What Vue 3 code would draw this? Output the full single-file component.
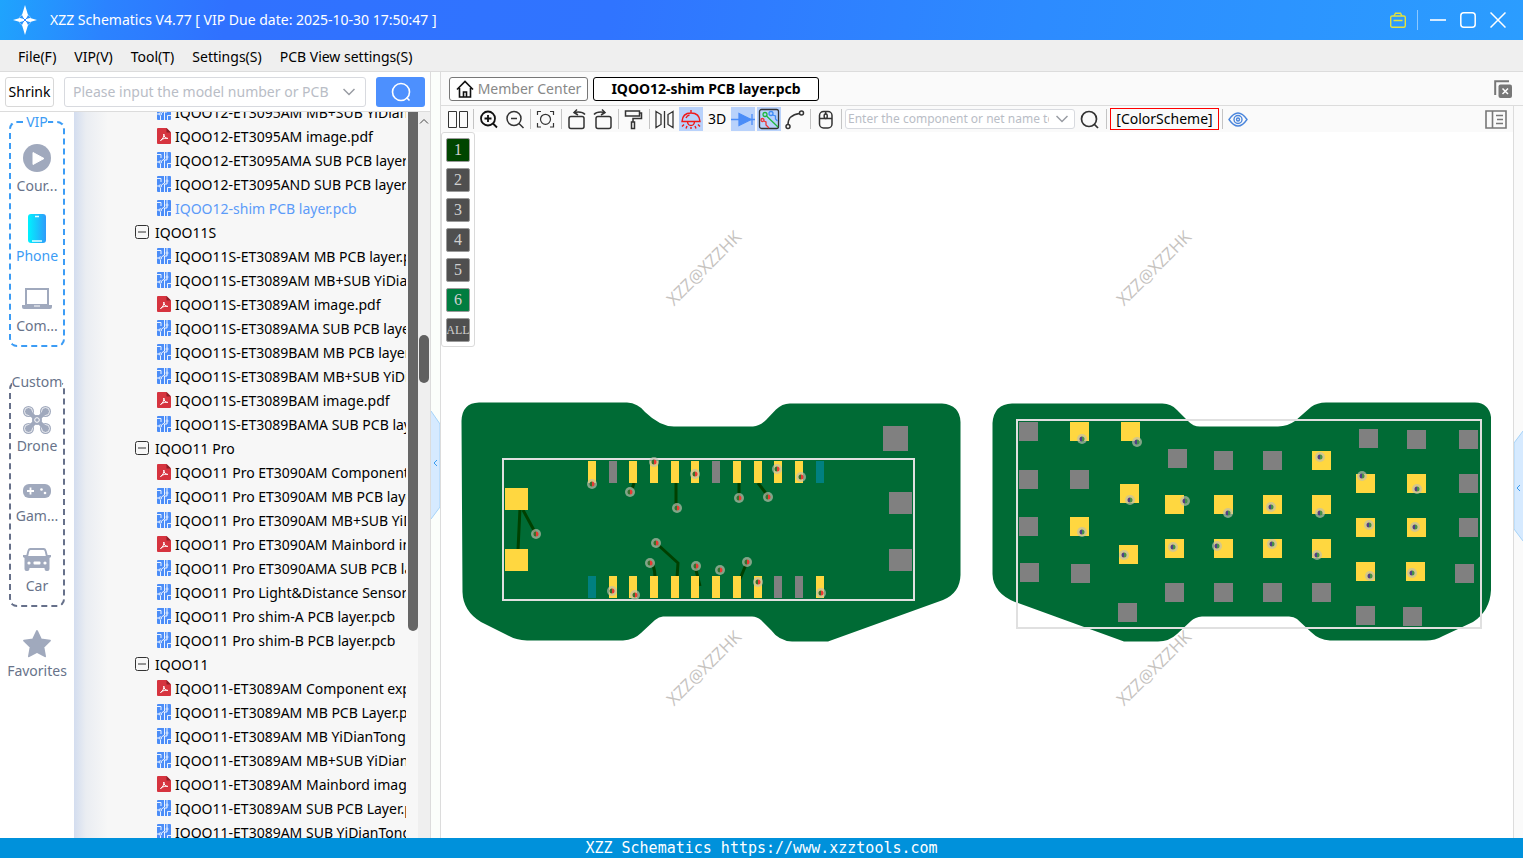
<script setup>
import { ref } from 'vue'

const menus = ['File(F)', 'VIP(V)', 'Tool(T)', 'Settings(S)', 'PCB View settings(S)']
const groups = [
  { name: 'VIP', kind: 'vip', items: [['play', 'Cour...'], ['phone', 'Phone'], ['laptop', 'Com...']] },
  { name: 'Custom', kind: 'custom', items: [['drone', 'Drone'], ['game', 'Gam...'], ['car', 'Car']] },
]
const tree = [
  ['pcb', 'IQOO12-ET3095AM MB+SUB YiDianTong.pcb'],
  ['pdf', 'IQOO12-ET3095AM image.pdf'],
  ['pcb', 'IQOO12-ET3095AMA SUB PCB layer.pcb'],
  ['pcb', 'IQOO12-ET3095AND SUB PCB layer.pcb'],
  ['pcb', 'IQOO12-shim PCB layer.pcb'],
  ['dir', 'IQOO11S'],
  ['pcb', 'IQOO11S-ET3089AM MB PCB layer.pcb'],
  ['pcb', 'IQOO11S-ET3089AM MB+SUB YiDianTong.pcb'],
  ['pdf', 'IQOO11S-ET3089AM image.pdf'],
  ['pcb', 'IQOO11S-ET3089AMA SUB PCB layer.pcb'],
  ['pcb', 'IQOO11S-ET3089BAM MB PCB layer.pcb'],
  ['pcb', 'IQOO11S-ET3089BAM MB+SUB YiDianTong.pcb'],
  ['pdf', 'IQOO11S-ET3089BAM image.pdf'],
  ['pcb', 'IQOO11S-ET3089BAMA SUB PCB layer.pcb'],
  ['dir', 'IQOO11 Pro'],
  ['pdf', 'IQOO11 Pro ET3090AM Component explorer.pdf'],
  ['pcb', 'IQOO11 Pro ET3090AM MB PCB layer.pcb'],
  ['pcb', 'IQOO11 Pro ET3090AM MB+SUB YiDianTong.pcb'],
  ['pdf', 'IQOO11 Pro ET3090AM Mainbord image.pdf'],
  ['pcb', 'IQOO11 Pro ET3090AMA SUB PCB layer.pcb'],
  ['pcb', 'IQOO11 Pro Light&Distance Sensor.pcb'],
  ['pcb', 'IQOO11 Pro shim-A PCB layer.pcb'],
  ['pcb', 'IQOO11 Pro shim-B PCB layer.pcb'],
  ['dir', 'IQOO11'],
  ['pdf', 'IQOO11-ET3089AM Component explorer.pdf'],
  ['pcb', 'IQOO11-ET3089AM MB PCB Layer.pcb'],
  ['pcb', 'IQOO11-ET3089AM MB YiDianTong.pcb'],
  ['pcb', 'IQOO11-ET3089AM MB+SUB YiDianTong.pcb'],
  ['pdf', 'IQOO11-ET3089AM Mainbord image.pdf'],
  ['pcb', 'IQOO11-ET3089AM SUB PCB Layer.pcb'],
  ['pcb', 'IQOO11-ET3089AM SUB YiDianTong.pcb'],
]
const active = ref('IQOO12-shim PCB layer.pcb')
const layers = ['1', '2', '3', '4', '5', '6', 'ALL']

const colors = { Y: '#ffd740', G: '#808080', T: '#008080' }
const padX = [588, 609, 629, 650, 671, 691, 712, 733, 754, 774, 795, 816]
const strip = (kinds, y) => padX.map((x, i) => ({ x, y, w: 8, h: 22, fill: colors[kinds[i]] }))
const square = (fill, w, h) => ([x, y]) => ({ x, y, w, h, fill })

const leftPads = [
  ...strip('YGYYYYGYYYYT', 461),
  ...strip('TYYYYYYYYGGY', 576),
  ...[[505, 488], [505, 549]].map(square(colors.Y, 23, 22)),
  ...[[889, 492], [889, 549]].map(square(colors.G, 23, 22)),
  square(colors.G, 25, 25)([883, 426]),
]
const leftVias = [[592, 484], [630, 492], [654, 462], [677, 508], [695, 474], [536, 534], [656, 543], [650, 563], [696, 566], [612, 591], [635, 595], [739, 498], [768, 497], [777, 469], [801, 477], [720, 570], [747, 562], [758, 582], [821, 593]]
const rightPads = [
  ...[[1019, 422], [1019, 470], [1019, 517], [1020, 563], [1070, 470], [1071, 564], [1118, 603], [1168, 449], [1165, 583], [1214, 451], [1214, 583], [1263, 451], [1263, 583], [1312, 583], [1359, 429], [1407, 430], [1459, 430], [1459, 474], [1459, 518], [1455, 564], [1356, 606], [1403, 607]].map(square(colors.G, 19, 19)),
  ...[[1070, 422], [1121, 422], [1120, 484], [1070, 517], [1119, 545], [1165, 495], [1214, 495], [1165, 539], [1214, 539], [1263, 495], [1263, 539], [1312, 451], [1312, 495], [1312, 539], [1356, 474], [1407, 474], [1356, 518], [1407, 518], [1356, 562], [1406, 562]].map(square(colors.Y, 19, 19)),
]
const rightVias = [[1082, 439], [1137, 442], [1130, 500], [1185, 501], [1228, 513], [1082, 532], [1124, 555], [1173, 547], [1217, 546], [1320, 457], [1271, 507], [1320, 513], [1272, 544], [1317, 555], [1362, 476], [1417, 489], [1369, 525], [1415, 527], [1370, 576], [1412, 573]]
const marks = [[704, 268], [1154, 268], [704, 668], [1154, 668]]
</script>

<template>
  <div class="app">
    <header class="title">
      <svg class="logo" width="24" height="30" viewBox="0 0 24 30">
        <circle cx="12" cy="15" r="6" fill="none" stroke="#bfe0ff" stroke-opacity=".6" />
        <path d="M12 0l3 10-2 4h-2l-2-4zM12 30l3-10-2-4h-2l-2 4zM0 15l7-2 4 1v2l-4 1zM24 15l-7-2-4 1v2l4 1z" fill="#fff" />
        <path d="M8 11l8 8M16 11l-8 8" stroke="#2f86ff" />
      </svg>
      <h1>XZZ Schematics V4.77 [ VIP Due date: 2025-10-30 17:50:47 ]</h1>
      <div class="win">
        <button aria-label="Toolbox"><svg width="16" height="16" viewBox="0 0 16 16" fill="none" stroke="#e3e23c" stroke-width="1.4"><rect x=".7" y="4" width="14.6" height="11.3" rx="1.5" /><path d="M4 4l1.500-2.800h5L12 4M3.500 8.500h9" /></svg></button>
        <i class="bar"></i>
        <button aria-label="Minimize"><svg width="16" height="16"><path d="M0 8h16" stroke="#fff" stroke-width="1.600" /></svg></button>
        <button aria-label="Maximize"><svg width="16" height="16"><rect x=".8" y=".8" width="14.4" height="14.4" rx="3" fill="none" stroke="#fff" stroke-width="1.500" /></svg></button>
        <button aria-label="Close"><svg width="16" height="16"><path d="M.5.5l15 15M15.500.5l-15 15" stroke="#fff" stroke-width="1.500" /></svg></button>
      </div>
    </header>

    <nav class="menu"><button v-for="m in menus" :key="m">{{ m }}</button></nav>

    <main>
      <aside class="left">
        <form class="find" @submit.prevent>
          <button type="button" class="shrink">Shrink</button>
          <div class="combo">
            <input aria-label="Model search" placeholder="Please input the model number or PCB number" />
            <svg width="12" height="8"><path d="M.5 1l5.500 5.500L11.500 1" fill="none" stroke="#999ca3" stroke-width="1.500" /></svg>
          </div>
          <button class="go" aria-label="Search"><svg width="20" height="20" fill="none" stroke="#fff" stroke-width="1.600"><circle cx="10" cy="10" r="8.500" /><path d="M15.500 15.500l3 3" /></svg></button>
        </form>
        <div class="split">
          <nav class="side">
            <fieldset v-for="g in groups" :key="g.name" :class="g.kind">
              <legend>{{ g.name }}</legend>
              <button v-for="[icon, label] in g.items" :key="label" class="item" :class="{ on: icon === 'phone' }">
                <svg width="30" height="30" viewBox="0 0 30 30" fill="#a0a9bd">
                  <template v-if="icon === 'play'"><circle cx="15" cy="15" r="14" /><path d="M11 9.500l11 6-11 6z" fill="#fff" stroke="#fff" stroke-linejoin="round" /></template>
                  <template v-else-if="icon === 'phone'">
                    <defs><linearGradient id="ph"><stop stop-color="#00f2fe" /><stop offset="1" stop-color="#2f9bfa" /></linearGradient></defs>
                    <rect x="6" y="1" width="18" height="29" rx="3" fill="url(#ph)" /><path d="M13 3.500h4M10 28h10" stroke="#e6ffff" stroke-width="1.500" />
                  </template>
                  <template v-else-if="icon === 'laptop'"><rect x="4" y="6" width="22" height="16" fill="none" stroke="#a0a9bd" stroke-width="2" /><path d="M0 22h30v2q0 2-2 2H2q-2 0-2-2z" /><path d="M12 23h6" stroke="#fff" /></template>
                  <template v-else-if="icon === 'drone'">
                    <circle cx="6.500" cy="6.500" r="5.500" /><circle cx="23.500" cy="6.500" r="5.500" /><circle cx="6.500" cy="23.500" r="5.500" /><circle cx="23.500" cy="23.500" r="5.500" />
                    <g fill="none" stroke="#fff" stroke-width=".8"><circle cx="6.500" cy="6.500" r="4" /><circle cx="23.500" cy="6.500" r="4" /><circle cx="6.500" cy="23.500" r="4" /><circle cx="23.500" cy="23.500" r="4" /></g>
                    <path d="M7 7l16 16M23 7L7 23" stroke="#a0a9bd" stroke-width="4.500" stroke-linecap="round" /><circle cx="15" cy="15" r="5" /><circle cx="15" cy="15" r="2.300" fill="none" stroke="#fff" />
                  </template>
                  <template v-else-if="icon === 'game'"><rect x="1" y="9" width="28" height="14" rx="6" /><path d="M5 16h7M8.500 12.500v7" stroke="#fff" stroke-width="1.800" /><circle cx="19.500" cy="14.500" r="1.300" fill="#fff" /><circle cx="23" cy="18" r="1.300" fill="#fff" /></template>
                  <template v-else>
                    <path d="M8 3h14q2 0 2.600 3l1 4H29v2l-1.500 1v11q0 2-2 2h-1q-2 0-2-3h-15q0 3-2 3h-1q-2 0-2-2V13L1 12v-2h3.400l1-4Q6 3 8 3z" />
                    <path d="M8.500 5h13q1 0 1.300 1.500l1 4.500H6.200l1-4.500Q7.500 5 8.500 5z" fill="#fff" /><circle cx="7" cy="18" r="1.600" fill="#fff" /><circle cx="23" cy="18" r="1.600" fill="#fff" /><rect x="11.500" y="16.500" width="7" height="3" rx="1" fill="#fff" />
                  </template>
                </svg>
                <span>{{ label }}</span>
              </button>
            </fieldset>
            <button class="item fav">
              <svg width="30" height="30" viewBox="0 0 30 30" fill="#a0a9bd"><path d="M15 2l4 8.500 9 1.200-6.600 6.300 1.700 9.300-8.100-4.300-8.100 4.300L8.600 18 2 11.700l9-1.200z" stroke="#a0a9bd" stroke-width="1.800" stroke-linejoin="round" /></svg>
              <span>Favorites</span>
            </button>
          </nav>

          <div class="tree">
            <ul>
              <li v-for="[kind, name] in tree" :key="name" :class="[kind, { on: name === active }]">
                <svg v-if="kind === 'pcb'" width="14" height="16" viewBox="0 0 14 16">
                  <rect width="14" height="16" rx="1" fill="#4b8df8" />
                  <g fill="none" stroke="#fff" stroke-width=".9"><path d="M0 2.500h4v3.500M7.500 0v7l-3 2M10 0v4M10 6v2H7.500v8M0 10h2M3.500 12v4M10.500 16v-4.500H14" /><circle cx="10" cy="5" r="1" /><circle cx="3.300" cy="10" r="1.200" /></g>
                </svg>
                <svg v-else-if="kind === 'pdf'" width="14" height="16" viewBox="0 0 14 16">
                  <path d="M1 0h8.500L14 4.500V15q0 1-1 1H1q-1 0-1-1V1q0-1 1-1z" fill="#d6343f" /><path d="M9.500 0L14 4.500H9.500z" fill="#8e1f28" />
                  <path d="M3.500 12.500c2-1 4-4.500 3.300-6.500 0 3 2 4.600 4 4.400-2-.6-5 0-7.300 2.100" fill="none" stroke="#fff" />
                </svg>
                <svg v-else width="14" height="14" viewBox="0 0 14 14" fill="none" stroke="#333"><rect x=".5" y=".5" width="13" height="13" rx="2" /><path d="M3 7h8" /></svg>
                <button @click="active = name">{{ name }}</button>
              </li>
            </ul>
          </div>
          <div class="inner"><i></i></div>
          <div class="outer"><svg width="10" height="6"><path d="M1 5.500l4-4 4 4" fill="none" stroke="#444" /></svg><i></i></div>
        </div>
      </aside>

      <div class="gutter">
        <button aria-label="Collapse file list"><svg width="9" height="108" viewBox="0 0 9 108"><path d="M0 0l9 13v83l-9 12z" fill="#d6eaff" /><path d="M0 0l9 13v83l-9 12" fill="none" stroke="#a5d3f8" /><path d="M6 49l-3 3 3 3" fill="none" stroke="#3a9cf0" /></svg></button>
      </div>

      <section class="work">
        <div class="tabs">
          <button class="tab home"><svg width="18" height="18" viewBox="0 0 18 18" fill="none" stroke="#111" stroke-width="1.600"><path d="M1 9.500L9 1.500l8 8M3.500 8v9h11V8M7.500 17v-5h3v5" /></svg>Member Center</button>
          <button class="tab cur">IQOO12-shim PCB layer.pcb</button>
          <button class="closeall" aria-label="Close all tabs"><svg width="18" height="18" viewBox="0 0 18 18"><path d="M1.200 15V1.200H15" fill="none" stroke="#777" stroke-width="2" /><rect x="4.500" y="4.500" width="13.500" height="13.500" rx="2" fill="#777" /><path d="M8.500 8.500l5.500 5.500M14 8.500L8.500 14" stroke="#fff" stroke-width="1.500" /></svg></button>
        </div>
        <div class="below">
          <div class="stage">
            <div class="tools">
              <button aria-label="Split view"><svg viewBox="0 0 24 24"><path d="M2.500 4.500h8v16h-8zM13.500 4.500h8v16h-8z" stroke-width="1" /></svg></button>
              <i></i>
              <button aria-label="Zoom in"><svg viewBox="0 0 24 24" stroke="#111" stroke-width="1.800"><circle cx="11" cy="11.500" r="7" /><path d="M16 16.500l4 4M7.500 11.500h7M11 8v7" /></svg></button>
              <button aria-label="Zoom out"><svg viewBox="0 0 24 24"><circle cx="11" cy="11.500" r="7" /><path d="M16 16.500l4.500 4.500M8 11.500h6" /></svg></button>
              <i></i>
              <button aria-label="Fit"><svg viewBox="0 0 24 24" stroke-width="1.200"><path d="M3.500 8V4.500H7M16 4.500h3.500V8M19.500 16v4H16M7 20H3.500v-4" /><circle cx="11.500" cy="12.300" r="5" /></svg></button>
              <i></i>
              <button aria-label="Rotate left"><svg viewBox="0 0 24 24"><rect x="4" y="9.500" width="15" height="12" rx="2" /><path d="M20 7.500Q17 4 9 5.500M12 2.500L9 5.500l4 2.500" /></svg></button>
              <button aria-label="Rotate right"><svg viewBox="0 0 24 24"><rect x="5" y="9.500" width="15" height="12" rx="2" /><path d="M3 7.500Q6 4 14 5.500M11 2.500l3 3-4 2.500" /></svg></button>
              <i></i>
              <button aria-label="Format painter"><svg viewBox="0 0 24 24"><path d="M3.500 4h14v5h-14zM17.500 6h2v5.500H11V15M9.500 15h3v6.500h-3z" /></svg></button>
              <i></i>
              <button aria-label="Mirror"><svg viewBox="0 0 24 24" stroke-width="1.300"><path d="M11.500 4v17M3 4.500l5 3v10l-5 3zM20 4.500l-5 3v10l5 3z" /></svg></button>
              <button class="lit" aria-label="Light"><svg viewBox="0 0 24 24" stroke="#f01818" stroke-width="1.400"><path d="M12 3v3M3 14.500Q3.500 6 12 6t9 8.500zM8.500 15q.5 3.500 3.500 3.500t3.500-3.500M5 17.500l-2 2M8 19l-1 2.500M12 20v2M16 19l1 2.500M19 17.500l2 2M7 11q1-2.500 3.500-3" /></svg></button>
              <button class="txt">3D</button>
              <button class="lit" aria-label="Diode"><svg viewBox="0 0 24 24" stroke="#4b8df8" stroke-width="1.300"><path d="M0 12.500h24M21 7v11" /><path d="M8 6.500v12l12-6z" fill="#4b8df8" /></svg></button>
              <button class="lit" aria-label="Net lines"><svg viewBox="0 0 24 24" stroke-width="1.300"><rect x="2.500" y="2.500" width="19" height="19" rx="2" /><g stroke="#1fb83c"><circle cx="8" cy="7.500" r="2" /><path d="M9.500 9l11.500 11" /></g><g stroke="#e33"><circle cx="5.500" cy="13" r="1.500" /><path d="M7 14l2 1v3l3 3" /></g><g stroke="#3f8cf5"><circle cx="14" cy="6.500" r="2" /><path d="M15.500 8l3 1v3l2 2" /></g></svg></button>
              <button aria-label="Measure"><svg viewBox="0 0 24 24"><circle cx="18.500" cy="6" r="2" /><circle cx="5" cy="19.500" r="2" /><path d="M16.500 6.500Q5 8 5 17.500" /></svg></button>
              <i></i>
              <button aria-label="Mouse mode"><svg viewBox="0 0 24 24"><rect x="5.500" y="4.500" width="12.500" height="16.500" rx="4" /><path d="M5.500 11.500H18M11.700 4.500v3" /><rect x="10.200" y="7" width="3" height="4.500" rx="1.200" /></svg></button>
              <i></i>
              <div class="combo small">
                <input aria-label="Component search" placeholder="Enter the component or net name to search" />
                <svg width="12" height="8"><path d="M.5 1l5.500 5.500L11.500 1" fill="none" stroke="#999ca3" stroke-width="1.500" /></svg>
              </div>
              <button aria-label="Find"><svg viewBox="0 0 24 24" stroke-width="1.700"><circle cx="10" cy="12" r="7.500" /><path d="M15.500 17.500l3.500 3.500" /></svg></button>
              <i></i>
              <button class="scheme">[ColorScheme]</button>
              <i></i>
              <button aria-label="Visibility"><svg viewBox="0 0 24 24" stroke="#4b86dc" stroke-width="1.400"><path d="M3 12.500Q12-.5 21 12.500Q12 25.500 3 12.500z" /><circle cx="12" cy="12.500" r="4" /><circle cx="12" cy="12.500" r="1.500" /></svg></button>
              <button class="panel" aria-label="Side panel"><svg viewBox="0 0 24 24" stroke="#777" stroke-width="1.600"><path d="M2 4h20v17H2zM8.500 4v17M12 8.500h7M13 12.500h6M12 16.500h7" /></svg></button>
            </div>
            <div class="canvas">
              <svg class="board" viewBox="0 0 1072 706" preserveAspectRatio="xMinYMin meet">
                <g transform="translate(-441 -132)">
                  <text v-for="[x, y] in marks" :key="x + '-' + y" :transform="`translate(${x} ${y}) rotate(-45)`" class="mark" dy="6">XZZ@XZZHK</text>
                  <path class="pcb" d="M461.500 421Q462 403 479 402.500H627Q638 403 645 412Q660 426.500 674 426.500H753Q760 426 766 420L776 409.500Q783 402.500 792 403.500H942Q960 405 960.500 422V575Q960 593 943 600L828 641.500H792Q779 641 771 630L761 620Q757 616.500 752 616.500H663Q659 616.500 655 620L641 633Q634 640 623 640.500H527Q516 640 508 635.500L481 622Q463 611 462.500 592z" />
                  <path class="pcb" d="M992.500 423Q994 404 1012 403.500H1161Q1171 403 1177 410L1188 421Q1193 426.500 1200 426.500H1278Q1288 426 1295 421L1311 407Q1317 402.500 1326 402.500H1475Q1489 403 1491 417V590Q1490 611 1473 622L1443 636Q1435 640.500 1426 640.500H1330Q1319 640 1311 632L1297 619Q1294 616.500 1289 616.500H1202Q1195 617 1191 621L1177 634Q1169 641.500 1158 641.500H1124L1015 602Q993 593 992.500 574z" />
                  <path class="trace" d="M520 508l-2 42M523 510l13 24M634 483l-2 6M676 483v22M739 483v14M758 483l10 13M656 543l22 20-1 15M649 562q6 2 6 16M695 566l5 20M747 562l-7 17" />
                  <rect class="frame" x="503" y="459" width="411" height="141" />
                  <rect v-for="p in leftPads" :key="p.x + '-' + p.y" :x="p.x" :y="p.y" :width="p.w" :height="p.h" :fill="p.fill" />
                  <rect v-for="p in rightPads" :key="p.x + '-' + p.y" :x="p.x" :y="p.y" :width="p.w" :height="p.h" :fill="p.fill" />
                  <rect class="frame" x="1017" y="420" width="464" height="208" />
                  <g v-for="[x, y] in leftVias" :key="x + '-' + y" :transform="`translate(${x} ${y})`"><circle class="ring" r="5" /><path d="M0-2.500v5q-2.500 0-2.500-2.500T0-2.500" fill="#38702c" /><path d="M0-2.500v5q2.500 0 2.500-2.500T0-2.500" fill="#e93a33" /></g>
                  <g v-for="[x, y] in rightVias" :key="x + '-' + y" :transform="`translate(${x} ${y})`"><circle class="ring" r="5" /><path d="M0-2.500v5q-2.500 0-2.500-2.500T0-2.500" fill="#513f86" /><path d="M0-2.500v5q2.500 0 2.500-2.500T0-2.500" fill="#46904a" /></g>
                </g>
              </svg>
              <div class="layers"><button v-for="l in layers" :key="l" :class="'l' + l">{{ l }}</button></div>
            </div>
          </div>
          <div class="edge">
            <button aria-label="Expand side panel"><svg width="9" height="110" viewBox="0 0 9 110"><path d="M9 0L0 12v86l9 12z" fill="#d6eaff" /><path d="M9 0L0 12v86l9 12" fill="none" stroke="#a5d3f8" /><path d="M6 54l-3 3 3 3" fill="none" stroke="#3a9cf0" /></svg></button>
          </div>
        </div>
      </section>
    </main>

    <footer>XZZ Schematics https://www.xzztools.com</footer>
  </div>
</template>

<style>
body { margin: 0; }
</style>

<style scoped>
* { box-sizing: border-box; }
.app { height: 100vh; display: flex; flex-direction: column; overflow: hidden; background: #fff; color: #000; font: 14px/20px "Noto Sans", "Open Sans", sans-serif; }
button { font: inherit; color: inherit; background: none; border: 0; padding: 0; margin: 0; flex: none; white-space: nowrap; }
svg { display: block; flex: none; }
input { font: inherit; border: 0; outline: 0; background: none; padding: 0; min-width: 0; flex: 1; }
input::placeholder { color: #b9bdc6; opacity: 1; }

.title { height: 40px; flex: none; display: flex; align-items: center; padding: 0 17px 0 13px; color: #fff; background: linear-gradient(100deg, #1fa4fd 0, #2b83ff 7%, #3071ff 15%, #3074ff 40%, #2d8bff 68%, #2b9dff 100%); }
h1 { margin: 0 0 0 13px; font-size: 14px; font-weight: 400; flex: 1; }
.win { display: flex; align-items: center; gap: 14px; }
.win .bar { width: 1px; height: 20px; background: #8cc8ff; margin: 0 -2px 0 -3px; }

.menu { height: 32px; flex: none; display: flex; align-items: center; gap: 18px; padding: 2px 18px 0; background: #efefef; border-bottom: 1px solid #dcdcdc; }
main { flex: 1; min-height: 0; display: flex; }
.left { width: 431px; flex: none; display: flex; flex-direction: column; border-right: 1px solid #dcdcdc; }
.find { height: 40px; flex: none; display: flex; align-items: center; padding: 1px 5px 0; border-bottom: 1px solid #dcdcdc; }
.shrink { width: 49px; height: 30px; border: 1px solid #d8d8d8; border-radius: 3px; }
.combo { display: flex; align-items: center; width: 302px; height: 30px; margin: 0 10px; padding: 0 10px 0 8px; gap: 12px; border: 1px solid #d8dadf; border-radius: 3px; background: #fff; }
.go { flex: 1; height: 30px; display: grid; place-items: center; background: #4d90fe; border-radius: 3px; }
.split { flex: 1; min-height: 0; display: flex; overflow: hidden; background: #f7f7f7; }

.side { width: 74px; flex: none; background: #fff; padding: 0 9px; color: #68738a; display: flex; flex-direction: column; align-items: stretch; }
fieldset { margin: 0 0 25px; padding: 5px 0 0; min-width: 0; border: 2px dashed #66708a; border-radius: 8px; display: flex; flex-direction: column; gap: 2px; }
fieldset.custom { margin-bottom: 16px; }
fieldset.vip { border-color: #3c9cf5; }
legend { margin: 0 auto; padding: 0; height: 20px; white-space: nowrap; }
.vip legend, .item.on { color: #3c9cf5; }
.item { display: flex; flex-direction: column; align-items: center; gap: 3px; height: 68px; padding-top: 6px; }
.custom .item { padding-top: 8px; gap: 1px; }
.fav { gap: 2px; }

.tree { flex: 1; min-width: 0; overflow: hidden; background: linear-gradient(90deg, #d3ddef 0, #eaedf2 12px, #f7f7f7 34px); }
ul { margin: -12px 2px 0 0; padding: 0 0 0 61px; list-style: none; overflow: hidden; }
li { display: flex; align-items: center; height: 24px; gap: 4px; padding-left: 22px; white-space: nowrap; }
li button { padding-top: 2px; }
li.dir { padding-left: 0; gap: 6px; }
li.on { color: #5c9bf9; }
.inner { width: 10px; flex: none; }
.inner i { display: block; height: 519px; background: #666; border-radius: 0 0 5px 5px; }
.outer { width: 12px; flex: none; background: #efefef; padding: 6px 1px 0; }
.outer i { display: block; width: 10px; height: 48px; margin-top: 211px; border-radius: 5px; background: #606060; }

.gutter { width: 10px; flex: none; background: #fbfefb; border-right: 1px solid #dcdcdc; padding-top: 339px; }
.work { flex: 1; min-width: 0; display: flex; flex-direction: column; }
.tabs { height: 34px; flex: none; display: flex; align-items: center; gap: 5px; padding: 0 11px 0 8px; background: #fafafa; border-bottom: 1px solid #dcdcdc; }
.tab { height: 24px; border-radius: 3px; background: #fff; }
.home { width: 139px; display: flex; align-items: center; justify-content: center; gap: 4px; color: #888; border: 1px solid #777; }
.cur { width: 226px; border: 1px solid #000; font-weight: 700; }
.closeall { margin-left: auto; }
.below { flex: 1; min-height: 0; display: flex; }
.stage { flex: 1; min-width: 0; display: flex; flex-direction: column; }
.tools { height: 26px; flex: none; display: flex; align-items: center; gap: 2px; padding: 0 5px; background: #fafafa; }
.tools > button { width: 24px; height: 24px; }
.tools > button svg { width: 24px; height: 24px; fill: none; }
.tools > button svg:not([stroke]) { stroke: #333; }
.tools > button svg:not([stroke-width]) { stroke-width: 1.5; }
.tools > i { width: 1px; height: 20px; margin: 0 1px; background: #c4c4c4; flex: none; }
.tools > .lit { background: #b9d2fb; }
.tools > .scheme { width: 109px; height: 22px; border: 1px solid #f00; line-height: 20px; }
.tools > .panel { margin-left: auto; }
.small { width: 230px; height: 20px; margin: 0 2px 0 0; padding: 0 6px 0 2px; gap: 7px; font-size: 12px; }
.canvas { flex: 1; min-height: 0; position: relative; overflow: hidden; background: #fff; }
.board { position: absolute; left: 0; top: 0; width: 100%; height: 100%; }
.mark { font: 17px "Open Sans", sans-serif; fill: #c6c3bf; text-anchor: middle; }
.pcb { fill: #006b35; }
.trace { fill: none; stroke: #004000; stroke-width: 3; }
.frame { fill: none; stroke: #e0e0e0; stroke-width: 2; }
.ring { fill: #bfbfb0; fill-opacity: .68; }
.layers { position: absolute; left: 0; top: 0; display: flex; flex-direction: column; gap: 6px; padding: 5px 4px 4px; border: 1px solid #dadada; border-radius: 3px; background: #fff; }
.layers button { width: 24px; height: 24px; background: #4f4f4f; color: #d0d0d0; border: 1px solid #9a9a9a; border-radius: 2px; font: 16px/22px "Liberation Serif", serif; display: flex; justify-content: center; }
.layers .l1 { background: #004500; }
.layers .l6 { background: #007d40; }
.layers .lALL { font-size: 12px; }
.edge { width: 10px; flex: none; background: #fafafa; border-left: 1px solid #dcdcdc; padding-top: 325px; }

footer { height: 20px; flex: none; background: #0091db; color: #fff; text-align: center; font: 15px/20px "DejaVu Sans Mono", monospace; }
</style>
